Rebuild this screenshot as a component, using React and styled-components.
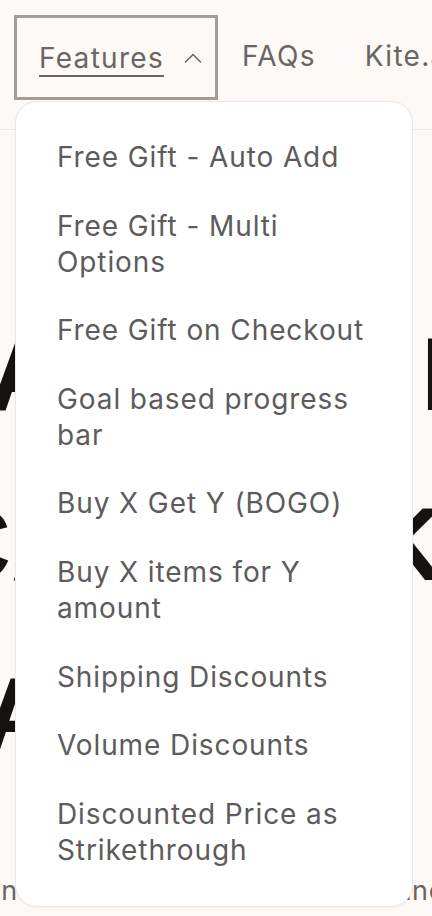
import React from 'react';
import styled, { createGlobalStyle } from 'styled-components';

const GlobalStyle = createGlobalStyle`
  html, body {
    margin: 0;
    padding: 0;
    background: #fdf9f6;
    overflow: hidden;
  }
  * {
    box-sizing: border-box;
  }
`;

const Page = styled.div`
  position: relative;
  width: 432px;
  height: 916px;
  overflow: hidden;
  background: #fdf9f6;
  font-family: Inter, "Noto Sans", sans-serif;
`;

const Header = styled.header`
  display: flex;
  align-items: flex-start;
  height: 130px;
  padding: 15px 0 0 14px;
  border-bottom: 1px solid #efe9e5;
  white-space: nowrap;
`;

const NavItem = styled.div`
  position: relative;
`;

const FeaturesButton = styled.button`
  display: flex;
  align-items: center;
  gap: 20px;
  width: 204px;
  height: 85px;
  padding: 0 0 0 22px;
  border: 3px solid #a29d99;
  background: transparent;
  font-family: inherit;
  font-size: 28px;
  letter-spacing: 1.3px;
  color: #6b6561;
  cursor: pointer;
`;

const Underlined = styled.span`
  text-decoration: underline;
  text-decoration-thickness: 2px;
  text-underline-offset: 7px;
`;

const NavLink = styled.a`
  display: block;
  height: 85px;
  line-height: 82px;
  padding: 0 25px 0 24px;
  font-size: 28px;
  letter-spacing: 1.3px;
  color: #6b6561;
  text-decoration: none;
`;

const Dropdown = styled.ul`
  position: absolute;
  top: 86px;
  left: 1px;
  z-index: 5;
  width: 398px;
  margin: 0;
  padding: 37px 41px 38px;
  list-style: none;
  display: flex;
  flex-direction: column;
  gap: 32.6px;
  background: #ffffff;
  border: 1px solid #ebe8e7;
  border-radius: 22px;
  box-shadow: 0 1px 3px rgba(60, 40, 30, 0.04);
`;

const MenuItem = styled.li`
  font-size: 28px;
  line-height: 36px;
  letter-spacing: 0.9px;
  color: #5d5b5b;
  white-space: normal;
`;

const Hero = styled.section`
  padding-top: 159px;
`;

const HeroLine = styled.div`
  display: flex;
  justify-content: space-between;
  width: ${(p) => p.width}px;
  margin-left: ${(p) => p.shift}px;
  font-family: "Liberation Sans", Arial, sans-serif;
  font-weight: 700;
  font-size: 104px;
  line-height: 170px;
  color: #161212;
  white-space: nowrap;
`;

const HeroText = styled.p`
  margin: 74px 0 0 -112px;
  font-size: 27px;
  line-height: 36px;
  letter-spacing: 0.6px;
  color: #6b6561;
  white-space: nowrap;
`;

const features = [
  'Free Gift - Auto Add',
  'Free Gift - Multi Options',
  'Free Gift on Checkout',
  'Goal based progress bar',
  'Buy X Get Y (BOGO)',
  'Buy X items for Y amount',
  'Shipping Discounts',
  'Volume Discounts',
  'Discounted Price as Strikethrough',
];

const ChevronUp = () => (
  <svg width="18" height="10" viewBox="0 0 18 10" fill="none">
    <polyline points="1.5,9 9,1.5 16.5,9" stroke="#6b6561" strokeWidth="1.6" strokeLinecap="round" strokeLinejoin="round" />
  </svg>
);

export default function App() {
  return (
    <Page>
      <GlobalStyle />
      <Header>
        <NavItem>
          <FeaturesButton>
            <Underlined>Features</Underlined>
            <ChevronUp />
          </FeaturesButton>
          <Dropdown>
            {features.map((f) => (
              <MenuItem key={f}>{f}</MenuItem>
            ))}
          </Dropdown>
        </NavItem>
        <NavLink href="#">FAQs</NavLink>
        <NavLink href="#">Kite.ai</NavLink>
      </Header>
      <Hero>
        <HeroLine shift={-12} width={664}>
          <span>AOV</span>
          <span>MAX</span>
        </HeroLine>
        <HeroLine shift={-64} width={600}>
          <span>CART</span>
          <span>KIT</span>
        </HeroLine>
        <HeroLine shift={-18} width={300}>
          <span>AND</span>
        </HeroLine>
        <HeroText>Implement and reward big shop deals; increase revenue</HeroText>
      </Hero>
    </Page>
  );
}
